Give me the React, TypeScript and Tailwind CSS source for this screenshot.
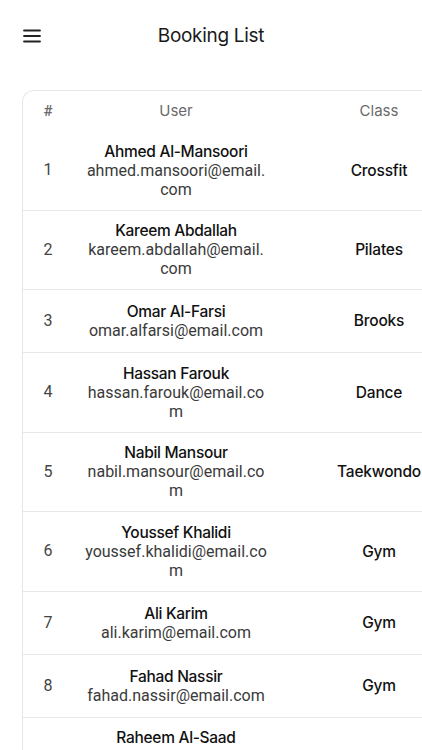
import React from 'react';

type Booking = {
  id: number;
  name: string;
  email: string[];
  cls: string;
};

const bookings: Booking[] = [
  { id: 1, name: 'Ahmed Al-Mansoori', email: ['ahmed.mansoori@email.', 'com'], cls: 'Crossfit' },
  { id: 2, name: 'Kareem Abdallah', email: ['kareem.abdallah@email.', 'com'], cls: 'Pilates' },
  { id: 3, name: 'Omar Al-Farsi', email: ['omar.alfarsi@email.com'], cls: 'Brooks' },
  { id: 4, name: 'Hassan Farouk', email: ['hassan.farouk@email.co', 'm'], cls: 'Dance' },
  { id: 5, name: 'Nabil Mansour', email: ['nabil.mansour@email.co', 'm'], cls: 'Taekwondo' },
  { id: 6, name: 'Youssef Khalidi', email: ['youssef.khalidi@email.co', 'm'], cls: 'Gym' },
  { id: 7, name: 'Ali Karim', email: ['ali.karim@email.com'], cls: 'Gym' },
  { id: 8, name: 'Fahad Nassir', email: ['fahad.nassir@email.com'], cls: 'Gym' },
  { id: 9, name: 'Raheem Al-Saad', email: ['raheem.alsaad@email.co', 'm'], cls: 'Gym' },
];

function MenuIcon() {
  return (
    <svg width="18" height="14" viewBox="0 0 18 14" fill="none">
      <path d="M1 1.5h16M1 7h16M1 12.5h16" stroke="#222" strokeWidth="1.8" strokeLinecap="round" />
    </svg>
  );
}

export default function App() {
  return (
    <div className="h-[750px] w-[422px] overflow-hidden bg-white font-['Inter',sans-serif] text-[#1c1c1c]">
      <header className="relative flex h-[72px] items-center justify-center">
        <button className="absolute left-[23px] top-[29px]">
          <MenuIcon />
        </button>
        <h1 className="text-[19px] font-normal tracking-[-0.3px] text-[#1a1a1a]">Booking List</h1>
      </header>

      <div className="ml-[22px] mt-[18px] w-[470px] rounded-tl-[12px] border-l border-t border-[#e6e6e6]">
        <div className="flex h-[40px] items-center text-[15px] text-[#6a6a6a]">
          <div className="w-[50px] text-center font-['Roboto',sans-serif] font-medium">#</div>
          <div className="w-[206px] text-center">User</div>
          <div className="w-[200px] text-center">Class</div>
        </div>
        {bookings.map((b) => (
          <div
            key={b.id}
            className="flex min-h-[63px] items-center border-b border-[#e8e8e8] py-[10.75px] last:border-b-0"
          >
            <div className="w-[50px] text-center font-['Roboto',sans-serif] text-[16px] text-[#444]">{b.id}</div>
            <div className="flex w-[206px] flex-col items-center text-center leading-[19px]">
              <span className="text-[15.5px] font-medium tracking-[-0.3px] text-[#111]">{b.name}</span>
              {b.email.map((line, i) => (
                <span key={i} className="font-['Roboto',sans-serif] text-[16px] text-[#3a3a3a]">
                  {line}
                </span>
              ))}
            </div>
            <div className="w-[200px] text-center text-[15.5px] font-medium tracking-[-0.2px] text-[#111]">
              {b.cls}
            </div>
          </div>
        ))}
      </div>
    </div>
  );
}
